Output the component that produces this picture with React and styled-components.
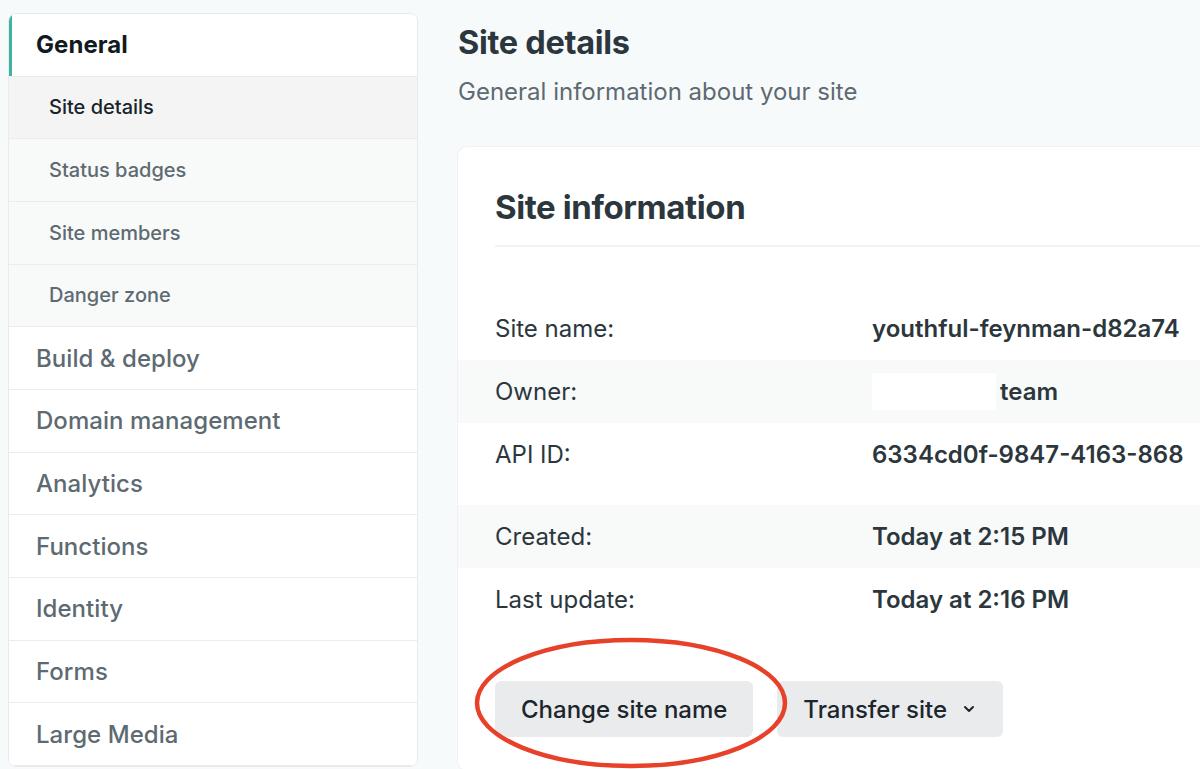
import React from "react"
import styled, { createGlobalStyle } from "styled-components"
import { ChevronDown } from "lucide-react"

const GlobalStyle = createGlobalStyle`
  html, body {
    margin: 0;
    padding: 0;
    background: #f7fafb;
    font-family: Inter, "Noto Sans", "Liberation Sans", sans-serif;
    overflow: hidden;
  }
  * {
    box-sizing: border-box;
  }
`

const Page = styled.div`
  display: flex;
  align-items: flex-start;
  gap: 40px;
  padding: 13px 0 0 8px;
  width: 1400px;
  height: 769px;
`

const Sidebar = styled.nav`
  width: 410px;
  flex: none;
  background: #fff;
  border: 1px solid #e8ebec;
  border-radius: 8px;
  overflow: hidden;
`

const NavItem = styled.div`
  height: 62.67px;
  display: flex;
  align-items: center;
  border-bottom: 1px solid #ebeded;
  padding-left: ${(p) => (p.$sub ? "40px" : "27px")};
  font-size: ${(p) => (p.$sub ? "20px" : "24px")};
  font-weight: ${(p) => (p.$head ? 700 : 500)};
  color: ${(p) => (p.$head ? "#111a1f" : p.$active ? "#18232a" : "#5e6a71")};
  background: ${(p) => (p.$active ? "#f4f4f4" : p.$sub ? "#f8f9f9" : "#fff")};
  box-shadow: ${(p) => (p.$head ? "inset 3px 0 0 #3fb2a0" : "none")};
  letter-spacing: ${(p) => (p.$sub ? "0" : "0.05px")};
`

const Main = styled.main`
  flex: none;
  width: 860px;
  padding-top: 10px;
`

const Title = styled.h1`
  margin: 0;
  font-size: 32.5px;
  line-height: 40px;
  font-weight: 700;
  color: #2b373d;
  letter-spacing: -0.3px;
`

const Subtitle = styled.p`
  margin: 14px 0 0;
  font-size: 24px;
  line-height: 30px;
  color: #5e6a71;
`

const Card = styled.section`
  position: relative;
  margin-top: 40px;
  background: #fff;
  border-radius: 9px;
  box-shadow: 0 0 0 1px #eff2f3;
  padding: 39px 0 33px;
`

const CardTitle = styled.h2`
  margin: 0 0 0 37px;
  padding-bottom: 17px;
  font-size: 33px;
  line-height: 42px;
  font-weight: 700;
  color: #2b373d;
  letter-spacing: -0.4px;
  border-bottom: 2px solid #f1f4f5;
`

const Rows = styled.div`
  margin-top: 50px;
`

const Row = styled.div`
  display: flex;
  align-items: ${(p) => (p.$tall ? "flex-start" : "center")};
  height: ${(p) => (p.$tall ? "82px" : "63px")};
  padding: ${(p) => (p.$tall ? "17px 0 0 37px" : "0 0 0 37px")};
  background: ${(p) => (p.$shade ? "#f8f9f9" : "#fff")};
  font-size: 24px;
  line-height: 30px;
`

const Label = styled.span`
  width: 377px;
  flex: none;
  color: #2b373d;
`

const Value = styled.span`
  display: flex;
  align-items: center;
  font-weight: 600;
  color: #2b373d;
  white-space: nowrap;
`

const Redacted = styled.span`
  display: inline-block;
  width: 124px;
  height: 37px;
  background: #fff;
  margin-right: 4px;
`

const Actions = styled.div`
  display: flex;
  gap: 24px;
  margin: 50px 0 0 37px;
`

const Button = styled.button`
  display: flex;
  align-items: center;
  gap: 14px;
  height: 56px;
  padding: 0 26px;
  border: none;
  border-radius: 6px;
  background: #eaebed;
  color: #1d262c;
  font-family: inherit;
  font-size: 24px;
  font-weight: 500;
  cursor: pointer;
`

const Circle = styled.svg`
  position: absolute;
  left: 13px;
  top: 489px;
  pointer-events: none;
`

const nav = [
  { label: "General", head: true },
  { label: "Site details", sub: true, active: true },
  { label: "Status badges", sub: true },
  { label: "Site members", sub: true },
  { label: "Danger zone", sub: true },
  { label: "Build & deploy" },
  { label: "Domain management" },
  { label: "Analytics" },
  { label: "Functions" },
  { label: "Identity" },
  { label: "Forms" },
  { label: "Large Media" },
]

export default function App() {
  return (
    <>
      <GlobalStyle />
      <Page>
        <Sidebar>
          {nav.map((n) => (
            <NavItem key={n.label} $head={n.head} $sub={n.sub} $active={n.active}>
              {n.label}
            </NavItem>
          ))}
        </Sidebar>
        <Main>
          <Title>Site details</Title>
          <Subtitle>General information about your site</Subtitle>
          <Card>
            <CardTitle>Site information</CardTitle>
            <Rows>
              <Row>
                <Label>Site name:</Label>
                <Value>youthful-feynman-d82a74</Value>
              </Row>
              <Row $shade>
                <Label>Owner:</Label>
                <Value>
                  <Redacted />
                  team
                </Value>
              </Row>
              <Row $tall>
                <Label>API ID:</Label>
                <Value>6334cd0f-9847-4163-868</Value>
              </Row>
              <Row $shade>
                <Label>Created:</Label>
                <Value>Today at 2:15 PM</Value>
              </Row>
              <Row>
                <Label>Last update:</Label>
                <Value>Today at 2:16 PM</Value>
              </Row>
            </Rows>
            <Actions>
              <Button>Change site name</Button>
              <Button>
                Transfer site
                <ChevronDown size={16} strokeWidth={3} />
              </Button>
            </Actions>
            <Circle width="320" height="134" viewBox="0 0 320 134">
              <ellipse cx="160" cy="67" rx="154" ry="63" fill="none" stroke="#e8412a" strokeWidth="4.5" />
            </Circle>
          </Card>
        </Main>
      </Page>
    </>
  )
}
